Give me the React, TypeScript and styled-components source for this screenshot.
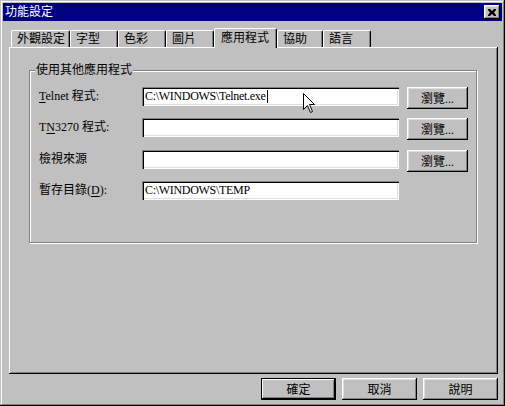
import React from 'react'
import styled, { createGlobalStyle } from 'styled-components'

const colors = {
  face: '#c0c0c0',
  light: '#dfdfdf',
  white: '#ffffff',
  shadow: '#808080',
  black: '#000000',
  title: '#000080',
}

const uiFont = `"Liberation Serif", "Noto Sans CJK TC", serif`

const GlobalStyle = createGlobalStyle`
  html, body {
    margin: 0;
    padding: 0;
    background: ${colors.face};
    overflow: hidden;
  }
`

interface Tab {
  label: string
  width: number
  active?: boolean
}

const tabs: Tab[] = [
  { label: '外觀設定', width: 59 },
  { label: '字型', width: 48 },
  { label: '色彩', width: 48 },
  { label: '圖片', width: 48 },
  { label: '應用程式', width: 63, active: true },
  { label: '協助', width: 46 },
  { label: '語言', width: 48 },
]

interface AppRow {
  label: React.ReactNode
  value: string
  caret?: boolean
  browse?: boolean
}

const rows: AppRow[] = [
  {
    label: (
      <>
        <u>T</u>elnet 程式:
      </>
    ),
    value: 'C:\\WINDOWS\\Telnet.exe',
    caret: true,
    browse: true,
  },
  {
    label: (
      <>
        T<u>N</u>3270 程式:
      </>
    ),
    value: '',
    browse: true,
  },
  { label: '檢視來源', value: '', browse: true },
  {
    label: (
      <>
        暫存目錄(<u>D</u>):
      </>
    ),
    value: 'C:\\WINDOWS\\TEMP',
  },
]

const App: React.FC = () => {
  return (
    <>
      <GlobalStyle />
      <Window>
        <TitleBar>
          <TitleText>功能設定</TitleText>
          <CloseButton>
            <svg width="8" height="7" viewBox="0 0 8 7">
              <path d="M0 0h2l2 2 2-2h2v1L6 3.5 8 6v1H6L4 5 2 7H0V6l2-2.5L0 1z" fill="#000" />
            </svg>
          </CloseButton>
        </TitleBar>
        <Body>
          <TabRow>
            {tabs.map((t) => (
              <TabItem key={t.label} $width={t.width} $active={!!t.active}>
                {t.label}
              </TabItem>
            ))}
          </TabRow>
          <Panel>
            <GroupBox>
              <Legend>使用其他應用程式</Legend>
              {rows.map((r, i) => (
                <Row key={i}>
                  <RowLabel>{r.label}</RowLabel>
                  <TextBox>
                    {r.value}
                    {r.caret && <Caret />}
                  </TextBox>
                  {r.browse && <BrowseButton>瀏覽...</BrowseButton>}
                </Row>
              ))}
            </GroupBox>
          </Panel>
          <Footer>
            <DialogButton $default>確定</DialogButton>
            <DialogButton>取消</DialogButton>
            <DialogButton>說明</DialogButton>
          </Footer>
        </Body>
        <Pointer width="13" height="21" viewBox="0 0 13 21">
          <path
            d="M0.5 0.5 L0.5 16.5 L4.5 12.5 L7.5 19.5 L9.5 18.5 L6.5 11.5 L11.5 11.5 Z"
            fill="#fff"
            stroke="#000"
            strokeWidth="1"
          />
        </Pointer>
      </Window>
    </>
  )
}
export default App

const raised = `
  box-shadow: inset -1px -1px ${colors.black}, inset 1px 1px ${colors.white},
    inset -2px -2px ${colors.shadow}, inset 2px 2px ${colors.light};
`

const Window = styled.div`
  position: relative;
  box-sizing: border-box;
  width: 505px;
  height: 406px;
  padding: 3px;
  display: flex;
  flex-direction: column;
  background: ${colors.face};
  box-shadow: inset -1px -1px ${colors.black}, inset 1px 1px ${colors.face},
    inset -2px -2px ${colors.shadow}, inset 2px 2px ${colors.white};
  font-family: ${uiFont};
  font-size: 12px;
  color: ${colors.black};
`

const TitleBar = styled.div`
  height: 18px;
  display: flex;
  align-items: center;
  justify-content: space-between;
  padding: 0 2px;
  background: ${colors.title};
  color: ${colors.white};
`

const TitleText = styled.span`
  font-size: 12px;
  line-height: 18px;
`

const CloseButton = styled.div`
  box-sizing: border-box;
  width: 16px;
  height: 14px;
  display: flex;
  align-items: center;
  justify-content: center;
  background: ${colors.face};
  ${raised}
`

const Body = styled.div`
  display: flex;
  flex-direction: column;
  padding: 7px 4px 0 6px;
`

const TabRow = styled.div`
  position: relative;
  z-index: 1;
  height: 19px;
  display: flex;
  align-items: flex-end;
  padding-left: 2px;
`

const TabItem = styled.div<{ $width: number; $active: boolean }>`
  box-sizing: border-box;
  width: ${(p) => p.$width}px;
  height: ${(p) => (p.$active ? 20 : 17)}px;
  margin-bottom: ${(p) => (p.$active ? -1 : 0)}px;
  padding-left: ${(p) => (p.$active ? 6 : 5)}px;
  padding-top: ${(p) => (p.$active ? 2 : 1)}px;
  background: ${colors.face};
  border-top: 1px solid ${colors.white};
  border-left: 1px solid ${colors.white};
  border-right: 1px solid ${colors.black};
  border-radius: 2px 2px 0 0;
  box-shadow: inset -1px 0 ${colors.shadow};
  line-height: 14px;
  white-space: nowrap;
`

const Panel = styled.div`
  box-sizing: border-box;
  height: 327px;
  padding: 23px 0 0 20px;
  box-shadow: inset -1px -1px ${colors.black}, inset 1px 1px ${colors.white},
    inset -2px -2px ${colors.shadow};
`

const GroupBox = styled.div`
  position: relative;
  box-sizing: border-box;
  width: 448px;
  height: 173px;
  padding: 16px 0 0 9px;
  border: 1px solid ${colors.shadow};
  box-shadow: 1px 1px 0 ${colors.white}, inset 1px 1px 0 ${colors.white};
`

const Legend = styled.span`
  position: absolute;
  top: -7px;
  left: 5px;
  padding: 0 1px;
  background: ${colors.face};
  line-height: 13px;
`

const Row = styled.div`
  height: 31.33px;
  display: flex;
  align-items: flex-start;
`

const RowLabel = styled.div`
  width: 103px;
  height: 19px;
  line-height: 19px;
  white-space: nowrap;

  u {
    text-underline-offset: 2px;
  }
`

const TextBox = styled.div`
  box-sizing: border-box;
  width: 257px;
  height: 19px;
  padding: 0 3px;
  display: flex;
  align-items: center;
  background: ${colors.white};
  box-shadow: inset 1px 1px ${colors.shadow}, inset 2px 2px ${colors.black},
    inset -1px -1px ${colors.white}, inset -2px -2px ${colors.light};
  line-height: 15px;
  letter-spacing: -0.3px;
  white-space: nowrap;
`

const Caret = styled.span`
  width: 1px;
  height: 13px;
  margin-left: 1px;
  background: ${colors.black};
`

const BrowseButton = styled.div`
  box-sizing: border-box;
  width: 61px;
  height: 22px;
  margin-left: 8px;
  display: flex;
  align-items: center;
  justify-content: center;
  background: ${colors.face};
  ${raised}
`

const Footer = styled.div`
  display: flex;
  justify-content: flex-end;
  gap: 6px;
  margin-top: 4px;
`

const DialogButton = styled.div<{ $default?: boolean }>`
  box-sizing: border-box;
  width: 75px;
  height: 22px;
  display: flex;
  align-items: center;
  justify-content: center;
  background: ${colors.face};
  box-shadow: ${(p) =>
    p.$default
      ? `inset 0 0 0 1px ${colors.black}, inset -2px -2px ${colors.black}, inset 2px 2px ${colors.white}, inset -3px -3px ${colors.shadow}`
      : `inset -1px -1px ${colors.black}, inset 1px 1px ${colors.white}, inset -2px -2px ${colors.shadow}, inset 2px 2px ${colors.light}`};
`

const Pointer = styled.svg`
  position: absolute;
  left: 303px;
  top: 93px;
`
